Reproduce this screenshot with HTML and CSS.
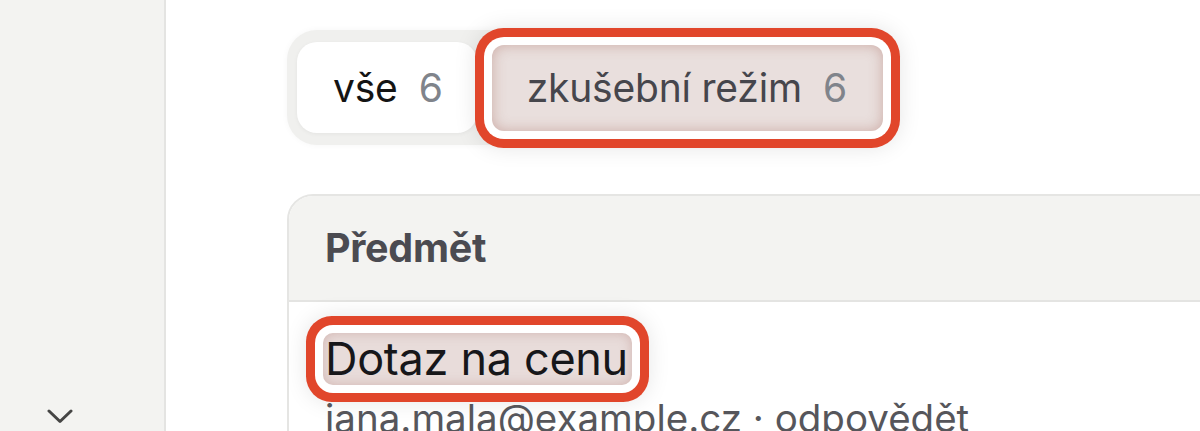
FILE: index.html
```html
<!DOCTYPE html>
<html lang="cs">
<head>
<meta charset="utf-8">
<title>Zprávy</title>
<link rel="stylesheet" href="styles.css">
</head>
<body>
<div class="app">
  <aside class="sidebar">
    <button class="collapse" aria-label="Rozbalit">
      <svg width="26" height="15" viewBox="0 0 26 15"><path d="M2 2 L13 12.5 L24 2" fill="none" stroke="#454545" stroke-width="3" stroke-linecap="round" stroke-linejoin="round"/></svg>
    </button>
  </aside>
  <main class="main">
    <div class="tabs">
      <div class="tab tab-active"><span class="tab-label">vše</span><span class="tab-count">6</span></div>
      <div class="tab tab-marked"><span class="tab-label">zkušební režim</span><span class="tab-count">6</span></div>
    </div>
    <section class="card">
      <div class="card-head">Předmět</div>
      <div class="card-row">
        <div class="subject"><span class="subject-text">Dotaz na cenu</span></div>
        <div class="meta">jana.mala@example.cz · odpovědět</div>
      </div>
    </section>
  </main>
</div>
</body>
</html>
```
FILE: styles.css
```css
* { box-sizing: border-box; }
html, body { margin: 0; padding: 0; height: 100%; overflow: hidden; background: #fff; }
body { font-family: Inter, "Noto Sans", sans-serif; }

.app { display: flex; height: 431px; }

.sidebar {
  width: 166px;
  flex: 0 0 166px;
  background: #f3f3f1;
  border-right: 2px solid #e4e4e2;
  display: flex;
  flex-direction: column;
  justify-content: flex-end;
  align-items: center;
  padding-bottom: 7px;
  padding-right: 45px;
}
.collapse {
  border: 0; background: transparent; padding: 0; width: 26px; height: 15px; display: block;
}
.collapse svg { display: block; }

.main {
  flex: 1;
  padding: 30px 0 0 121px;
  min-width: 0;
}

.tabs {
  display: inline-flex;
  align-items: center;
  background: #f0f0ee;
  border-radius: 30px;
  padding: 12px 14px 12px 10px;
  box-shadow: 0 0 6px rgba(0,0,0,0.04);
}
.tab {
  display: flex;
  align-items: center;
  gap: 21px;
  font-size: 39px;
  padding: 0 36px;
  letter-spacing: -0.2px;
}
.tab-active {
  height: 91px;
  background: #fff;
  border-radius: 20px;
  color: #141414;
  box-shadow: 0 1px 4px rgba(0,0,0,0.05);
  padding: 0 34px 0 36px;
}
.tab-label { line-height: 1; }
.tab-count { color: #80848b; line-height: 1; }
.tab-marked {
  height: 86px;
  margin-left: 15px;
  color: #46464c;
  border-radius: 12px;
  background: #e9dfdd;
  box-shadow: inset 0 0 14px rgba(170,110,100,0.45), 0 0 0 8px #fff, 0 0 0 17px #e1462b, 0 0 22px 17px rgba(0,0,0,0.10);
  padding: 0 36px 0 35px;
}

.card {
  margin-top: 49px;
  width: 1100px;
  border: 2px solid #e5e5e3;
  border-radius: 26px 26px 0 0;
  background: #fff;
}
.card-head {
  height: 106px;
  display: flex;
  align-items: center;
  padding-left: 36px;
  background: #f3f3f1;
  border-radius: 24px 24px 0 0;
  border-bottom: 2px solid #e4e4e2;
  font-size: 39.5px;
  font-weight: 700;
  color: #4b4b51;
  letter-spacing: -0.3px;
}
.card-row { padding: 31px 0 0 34px; }
.subject { display: flex; }
.subject-text {
  display: inline-block;
  font-size: 45px;
  line-height: 52px;
  color: #17171a;
  padding: 0 4px 0 2px;
  border-radius: 10px;
  background: #e8dcda;
  box-shadow: inset 0 0 12px rgba(170,110,100,0.35), 0 0 0 8px #fff, 0 0 0 17px #e1462b, 0 0 22px 17px rgba(0,0,0,0.10);
  letter-spacing: -0.3px;
}
.meta {
  margin-top: 10px;
  padding-left: 2px;
  font-size: 38.5px;
  color: #56565b;
  white-space: nowrap;
}
```
